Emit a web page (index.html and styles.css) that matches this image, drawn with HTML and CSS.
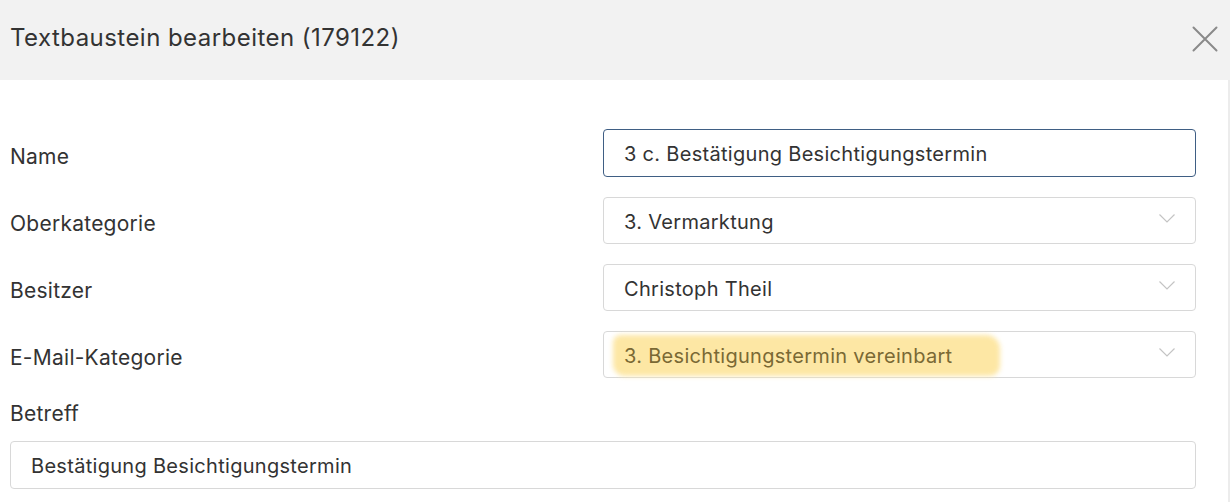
FILE: index.html
```html
<!DOCTYPE html>
<html lang="de">
<head>
<meta charset="utf-8">
<title>Textbaustein bearbeiten</title>
<link rel="stylesheet" href="styles.css">
</head>
<body>
<div class="modal">
  <header class="modal-header">
    <h1 class="modal-title">Textbaustein bearbeiten (179122)</h1>
    <button class="close" aria-label="Schließen">
      <svg width="26" height="26" viewBox="0 0 26 26"><path d="M1.5 1.5 L24.5 24.5 M24.5 1.5 L1.5 24.5" stroke="#8a8a8a" stroke-width="2" fill="none" stroke-linecap="round"/></svg>
    </button>
  </header>
  <div class="modal-body">
    <div class="form-grid">
      <label class="label">Name</label>
      <div class="control control-first focused"><span class="value">3 c. Bestätigung Besichtigungstermin</span></div>

      <label class="label">Oberkategorie</label>
      <div class="control select"><span class="value">3. Vermarktung</span><svg class="chevron" width="16" height="9" viewBox="0 0 16 9"><path d="M0.5 0.5 L8 8 L15.5 0.5" stroke="#c4c4c4" stroke-width="1.2" fill="none"/></svg></div>

      <label class="label">Besitzer</label>
      <div class="control select"><span class="value">Christoph Theil</span><svg class="chevron" width="16" height="9" viewBox="0 0 16 9"><path d="M0.5 0.5 L8 8 L15.5 0.5" stroke="#c4c4c4" stroke-width="1.2" fill="none"/></svg></div>

      <label class="label">E-Mail-Kategorie</label>
      <div class="control select"><span class="value marked">3. Besichtigungstermin vereinbart</span><svg class="chevron" width="16" height="9" viewBox="0 0 16 9"><path d="M0.5 0.5 L8 8 L15.5 0.5" stroke="#c4c4c4" stroke-width="1.2" fill="none"/></svg></div>
    </div>
    <div class="betreff">
      <label class="label betreff-label">Betreff</label>
      <div class="control wide"><span class="value">Bestätigung Besichtigungstermin</span></div>
    </div>
  </div>
</div>
</body>
</html>
```

FILE: styles.css
```css
* { box-sizing: border-box; }
html, body { margin: 0; padding: 0; background: #fff; }
body {
  font-family: Inter, "Liberation Sans", sans-serif;
  color: #333;
  width: 1230px;
  height: 502px;
  overflow: hidden;
}
.modal { width: 1230px; }
.modal-header {
  height: 80px;
  background: #f2f2f2;
  display: flex;
  align-items: center;
  justify-content: space-between;
  padding: 0 12px 0 10px;
}
.modal-title {
  margin: 0;
  font-size: 24px;
  font-weight: 400;
  color: #333;
  letter-spacing: 0.45px;
  position: relative;
  top: -3px;
}
.close {
  border: 0;
  background: none;
  padding: 0;
  width: 26px;
  height: 26px;
  display: flex;
  position: relative;
  top: -1px;
}
.modal-body {
  padding: 49px 32px 0 10px;
  border-right: 2px solid #ececec;
  height: 422px;
}
.form-grid {
  display: grid;
  grid-template-columns: 593px 593px;
  row-gap: 20px;
}
.label {
  font-size: 21px;
  letter-spacing: 0.25px;
  color: #333;
  display: flex;
  align-items: center;
  padding-top: 6px;
}
.control {
  height: 47px;
  border: 1px solid #d8d8d8;
  border-radius: 4px;
  display: flex;
  align-items: center;
  justify-content: space-between;
  padding: 2px 20px 0 20px;
  font-size: 20px;
  letter-spacing: 0.3px;
  color: #333;
  position: relative;
}
.control-first { height: 48px; }
.focused { border-color: #3f5e84; }
.chevron { margin-top: -6px; }
.value { position: relative; z-index: 1; }
.marked { color: #7a6934; }
.marked::before {
  content: "";
  position: absolute;
  left: -11px;
  right: -48px;
  top: -9px;
  bottom: -8px;
  background: #fde7a4;
  border-radius: 8px 14px 10px 12px;
  filter: blur(2.5px);
  z-index: -1;
}
.betreff { padding-top: 24px; }
.betreff-label { display: block; padding-top: 0; line-height: 24px; }
.wide { margin-top: 15px; height: 48px; width: 1186px; }
```
